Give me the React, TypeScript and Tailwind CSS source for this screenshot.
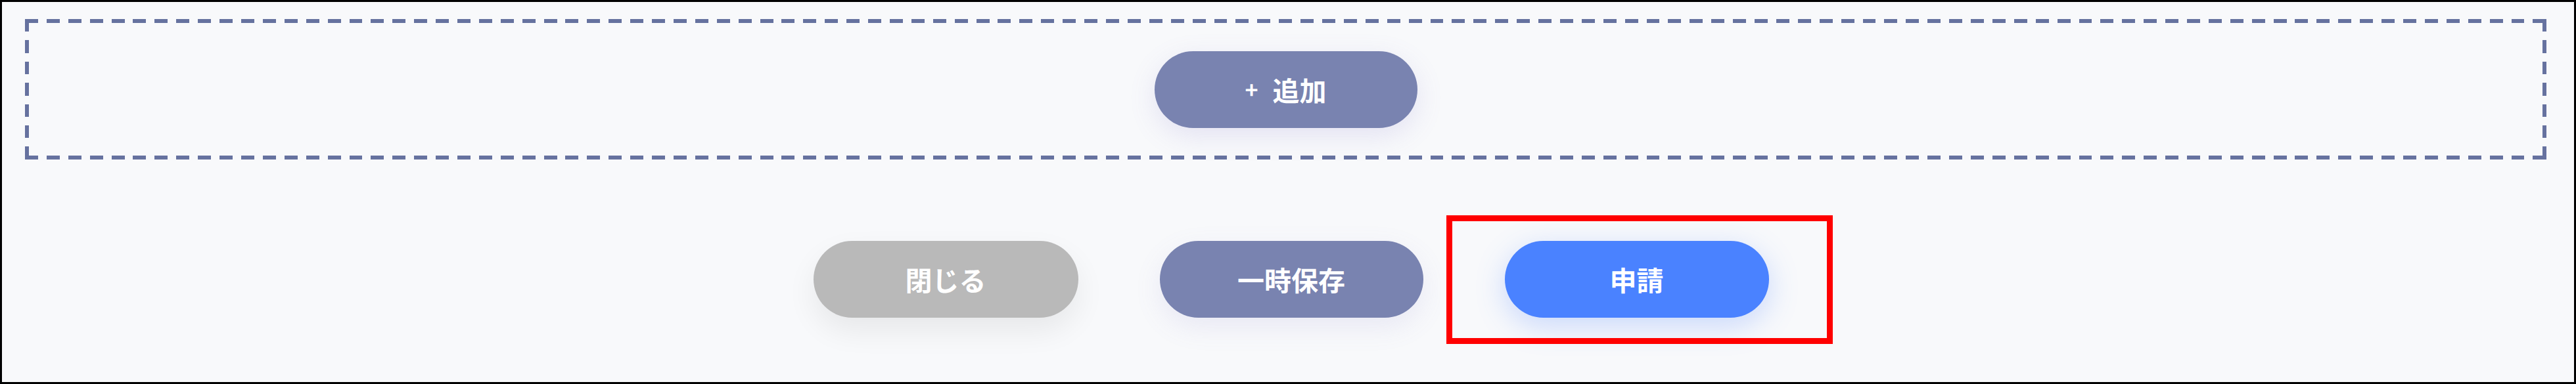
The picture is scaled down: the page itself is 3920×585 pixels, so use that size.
import React from "react";

const font = { fontFamily: '"Noto Sans CJK JP", "Noto Sans", sans-serif' };

export default function App() {
  return (
    <div
      className="w-[3920px] h-[585px] border-[3px] border-black bg-[#f8f9fb] flex flex-col"
      style={font}
    >
      <div className="mt-[26px] ml-[35px] mr-[42px] h-[214px] flex items-center justify-center [background:repeating-linear-gradient(90deg,#66729f_0_19.9px,transparent_19.9px_32.9px)_top_left/100%_6px_no-repeat,repeating-linear-gradient(90deg,#66729f_0_19.9px,transparent_19.9px_32.9px)_bottom_left/100%_6px_no-repeat,repeating-linear-gradient(180deg,#66729f_0_19.4px,transparent_19.4px_32.4px)_top_left/6px_100%_no-repeat,repeating-linear-gradient(180deg,#66729f_0_19.4px,transparent_19.4px_32.4px)_top_right/6px_100%_no-repeat]">
        <button className="w-[400px] h-[117px] rounded-full bg-[#7983b0] text-white font-bold text-[41px] flex items-center justify-center shadow-[0_12px_40px_rgba(122,112,200,0.16)]">
          <span className="text-[34px] mr-[22px] leading-none">+</span>
          <span className="leading-none">追加</span>
        </button>
      </div>
      <div className="mt-[124px] pl-[9px] flex justify-center gap-[124px]">
        <button className="w-[403px] h-[117px] rounded-full bg-[#b9b9b9] text-white font-bold text-[41px] flex items-center justify-center shadow-[0_20px_45px_rgba(0,0,0,0.07)]">
          閉じる
        </button>
        <button className="w-[401px] h-[117px] rounded-full bg-[#7983b0] text-white font-bold text-[41px] flex items-center justify-center shadow-[0_14px_40px_rgba(122,112,200,0.12)]">
          一時保存
        </button>
        <div className="relative">
          <button className="w-[402px] h-[117px] rounded-full bg-[#4a82ff] text-white font-bold text-[41px] flex items-center justify-center shadow-[0_12px_45px_rgba(74,130,255,0.28)]">
            申請
          </button>
          <div className="absolute left-[-89px] right-[-97px] top-[-39px] bottom-[-40px] border-[9px] border-[#ff0000] pointer-events-none" />
        </div>
      </div>
    </div>
  );
}
